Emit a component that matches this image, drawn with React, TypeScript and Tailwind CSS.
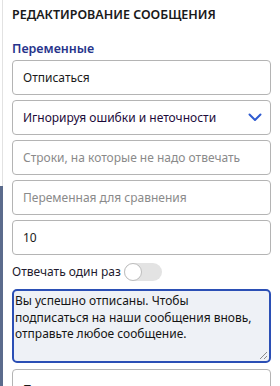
import React from "react";

function Chevron() {
  return (
    <svg width="14" height="9" viewBox="0 0 14 9" fill="none">
      <path d="M1.5 1.5 L7 7 L12.5 1.5" stroke="#2f5bd0" strokeWidth="2" strokeLinecap="round" strokeLinejoin="round" />
    </svg>
  );
}

function Field({ text, placeholder }: { text: string; placeholder?: boolean }) {
  return (
    <div className="h-[35px] shrink-0 rounded-[4px] border border-[#b4b4b4] flex items-center pl-[10px] pr-[10px] bg-white">
      <span className={`text-[12px] ${placeholder ? "text-[#8a8a8a]" : "text-[#1b1b1b]"}`}>{text}</span>
    </div>
  );
}

export default function App() {
  return (
    <div className="w-[280px] h-[386px] overflow-hidden bg-white flex" style={{ fontFamily: '"Noto Sans", "Open Sans", sans-serif' }}>
      <div className="w-[3px] flex flex-col shrink-0">
        <div className="h-[186px] shrink-0 border-r border-[#e2e2e2] bg-white" />
        <div className="flex-1 bg-[#5b6b8c]" />
      </div>
      <div className="flex-1 pl-[9px] pr-[9px] flex flex-col">
        <div className="shrink-0 pt-[6px] h-[40px] text-[12.5px] leading-[18px] font-semibold text-[#1a1a1a]">РЕДАКТИРОВАНИЕ СООБЩЕНИЯ</div>
        <div className="shrink-0 text-[12.5px] font-semibold text-[#27348b] h-[20px] leading-[18px]">Переменные</div>
        <div className="shrink-0 flex flex-col gap-[5px]">
          <Field text="Отписаться" />
          <div className="h-[35px] shrink-0 rounded-[4px] border border-[#b4b4b4] flex items-center justify-between pl-[10px] pr-[8px] bg-white">
            <span className="text-[12px] text-[#1d0b3a]">Игнорируя ошибки и неточности</span>
            <Chevron />
          </div>
          <Field text="Строки, на которые не надо отвечать" placeholder />
          <Field text="Переменная для сравнения" placeholder />
          <Field text="10" />
        </div>
        <div className="shrink-0 flex items-center h-[34px] gap-[3px]">
          <span className="text-[12px] text-[#221a2e]">Отвечать один раз</span>
          <div className="w-[38px] h-[18px] rounded-full bg-[#e3e3e3] relative">
            <div className="absolute left-0 top-0 w-[18px] h-[18px] rounded-full bg-white border border-[#bdbdbd]" />
          </div>
        </div>
        <div className="shrink-0 h-[74px] rounded-[5px] border-2 border-[#2b4fb5] bg-[#eef1f6] pl-[1px] pr-[4px] pt-[2px] relative">
          <p className="text-[12px] leading-[16.5px] text-[#151515]">
            Вы успешно отписаны. Чтобы подписаться на наши сообщения вновь, отправьте любое сообщение.
          </p>
          <svg className="absolute right-[1px] bottom-[1px]" width="10" height="10" viewBox="0 0 10 10">
            <path d="M9 2 L2 9 M9 6 L6 9" stroke="#8a8a8a" strokeWidth="1" />
          </svg>
        </div>
        <div className="shrink-0 mt-[6px] h-[38px] rounded-[4px] border border-[#b4b4b4] flex items-start justify-between pl-[10px] pr-[8px] pt-[11px] bg-white">
          <span className="text-[12px] text-[#1b1b1b]">Первостепенная проверка условия</span>
          <div className="pt-[6px]"><Chevron /></div>
        </div>
      </div>
    </div>
  );
}
